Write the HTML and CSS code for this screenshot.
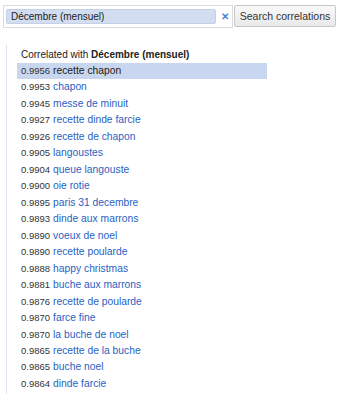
FILE: index.html
```html
<!DOCTYPE html>
<html>
<head>
<meta charset="utf-8">
<link rel="stylesheet" href="styles.css">
</head>
<body>
<div class="bar">
  <div class="field">
    <div class="input">Décembre (mensuel)</div>
    <span class="clear">✕</span>
  </div>
  <button class="btn">Search correlations</button>
</div>
<div class="results">
  <div class="head">Correlated with <b>Décembre (mensuel)</b></div>
  <div class="row sel"><span class="score">0.9956</span><span class="term dark">recette chapon</span></div>
  <div class="row"><span class="score">0.9953</span><span class="term">chapon</span></div>
  <div class="row"><span class="score">0.9945</span><span class="term">messe de minuit</span></div>
  <div class="row"><span class="score">0.9927</span><span class="term">recette dinde farcie</span></div>
  <div class="row"><span class="score">0.9926</span><span class="term">recette de chapon</span></div>
  <div class="row"><span class="score">0.9905</span><span class="term">langoustes</span></div>
  <div class="row"><span class="score">0.9904</span><span class="term">queue langouste</span></div>
  <div class="row"><span class="score">0.9900</span><span class="term">oie rotie</span></div>
  <div class="row"><span class="score">0.9895</span><span class="term">paris 31 decembre</span></div>
  <div class="row"><span class="score">0.9893</span><span class="term">dinde aux marrons</span></div>
  <div class="row"><span class="score">0.9890</span><span class="term">voeux de noel</span></div>
  <div class="row"><span class="score">0.9890</span><span class="term">recette poularde</span></div>
  <div class="row"><span class="score">0.9888</span><span class="term">happy christmas</span></div>
  <div class="row"><span class="score">0.9881</span><span class="term">buche aux marrons</span></div>
  <div class="row"><span class="score">0.9876</span><span class="term">recette de poularde</span></div>
  <div class="row"><span class="score">0.9870</span><span class="term">farce fine</span></div>
  <div class="row"><span class="score">0.9870</span><span class="term">la buche de noel</span></div>
  <div class="row"><span class="score">0.9865</span><span class="term">recette de la buche</span></div>
  <div class="row"><span class="score">0.9865</span><span class="term">buche noel</span></div>
  <div class="row"><span class="score">0.9864</span><span class="term">dinde farcie</span></div>
</div>
</body>
</html>
```
FILE: styles.css
```css
html, body {
  margin: 0;
  padding: 0;
  background: #fff;
  font-family: "Liberation Sans", Arial, sans-serif;
}
.bar {
  display: flex;
  align-items: center;
  padding: 4px 0 0 3px;
  height: 24px;
}
.field {
  box-sizing: border-box;
  width: 230px;
  height: 23px;
  border: 1px solid #dcdcdc;
  display: flex;
  align-items: center;
  padding-left: 2px;
}
.input {
  box-sizing: border-box;
  width: 210px;
  height: 15px;
  background: #d3ddf0;
  border: 1px solid #c4d0e6;
  border-radius: 2px;
  font-size: 10px;
  line-height: 13px;
  color: #222;
  padding-left: 4px;
}
.clear {
  margin-left: 5px;
  color: #4d7fd6;
  font-size: 10px;
  font-weight: bold;
}
.btn {
  box-sizing: border-box;
  height: 22px;
  width: 102px;
  margin: 0 0 0 1px;
  padding: 0;
  border: 1px solid #c8c8c8;
  border-radius: 2px;
  background: linear-gradient(#f9f9f9, #e9e9e9);
  font-family: "Liberation Sans", Arial, sans-serif;
  font-size: 10.5px;
  color: #333;
  white-space: nowrap;
}
.results {
  margin: 17px 0 0 6px;
  border-left: 1px solid #dde3ef;
  padding: 2px 0 2px 10px;
  width: 250px;
}
.head {
  font-size: 10px;
  color: #222;
  height: 16px;
  line-height: 16px;
  padding-left: 4px;
}
.row {
  height: 16.47px;
  line-height: 16px;
  display: flex;
  align-items: baseline;
  padding-left: 4px;
}
.row.sel {
  background: #c9d6ef;
}
.score {
  flex-shrink: 0;
  font-size: 9.5px;
  color: #333;
  margin-right: 3px;
}
.term {
  font-size: 10.3px;
  color: #2a5fc4;
  white-space: nowrap;
}
.term.dark {
  color: #222;
}
```
